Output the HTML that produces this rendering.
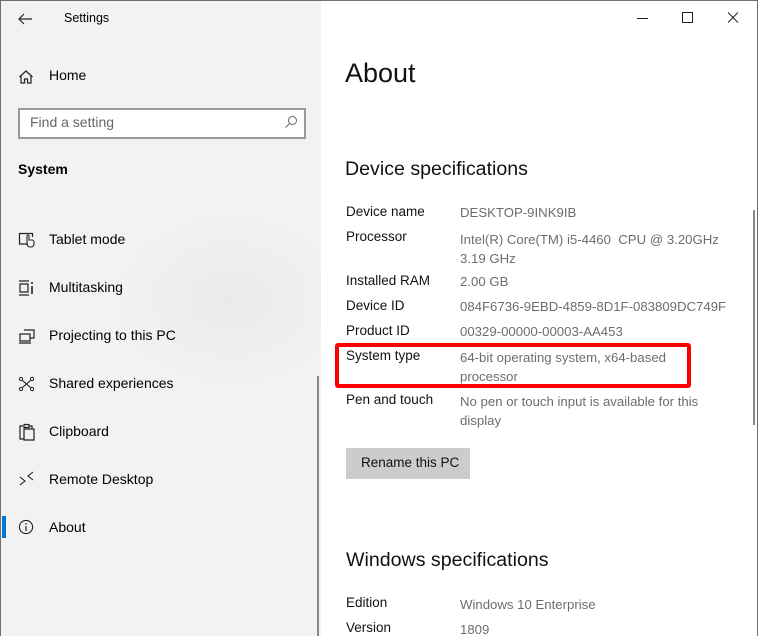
<!DOCTYPE html>
<html><head><meta charset="utf-8"><style>
*{margin:0;padding:0;box-sizing:border-box}
html,body{width:758px;height:636px;overflow:hidden}
body{font-family:"Segoe UI","Liberation Sans",sans-serif;background:#fff;position:relative;color:#000}
.win{position:absolute;left:0;top:1px;width:758px;height:636px;overflow:hidden}
.frame{position:absolute;left:0;top:0;width:758px;height:636px;border:1px solid #6f6f6f;border-bottom:none;pointer-events:none}
.side{position:absolute;left:0;top:-1px;width:321px;height:640px;background:radial-gradient(ellipse 120px 90px at 230px 300px,#e9eaeb,#f2f2f2 100%);background-color:#f2f2f2}
.t{position:absolute;white-space:nowrap}
.item{position:absolute;left:49px;font-size:14px;color:#000}
.ic{position:absolute;left:18px}
.lbl{position:absolute;left:346px;font-size:13.5px;color:#111}
.val{position:absolute;left:460px;font-size:13.2px;color:#6d6d6d;line-height:19px;white-space:nowrap}
</style></head><body><div class="win">
<div class="side">
 <svg class="ic" style="left:17px;top:12px" width="16" height="14" viewBox="0 0 16 14"><path d="M15 7H2M7 2L2 7l5 5" fill="none" stroke="#222" stroke-width="1.2"/></svg>
 <div class="t" style="left:64px;top:11px;font-size:12.5px">Settings</div>
 <svg class="ic" style="top:69px" width="16" height="16" viewBox="0 0 16 16"><path d="M1.5 8L8 2l6.5 6M3 7v7h3.5v-4h3v4H13V7" fill="none" stroke="#222" stroke-width="1.2"/></svg>
 <div class="item" style="top:67px">Home</div>
 <div style="position:absolute;left:18px;top:108px;width:288px;height:31px;border:2px solid #999;background:#fff"></div>
 <div class="t" style="left:30px;top:114px;font-size:14px;color:#666">Find a setting</div>
 <svg style="position:absolute;left:284px;top:115px" width="14" height="14" viewBox="0 0 14 14"><circle cx="8.5" cy="5.5" r="4" fill="none" stroke="#666"/><path d="M5.5 8.5L1.5 12.5" stroke="#666"/></svg>
 <div class="t" style="left:18px;top:161px;font-size:14px;font-weight:bold">System</div>

 <svg class="ic" style="top:231px" width="18" height="18" viewBox="0 0 18 18"><path d="M10 13H1.5V2.5h13V6" fill="none" stroke="#222" stroke-width="1.2"/><path d="M9 9v-4a1 1 0 0 1 2 0v4h3a2 2 0 0 1 2 2v2a3 3 0 0 1-3 3h-1a3 3 0 0 1-3-3z" fill="none" stroke="#222" stroke-width="1.1"/></svg>
 <div class="item" style="top:231px">Tablet mode</div>
 <svg class="ic" style="top:280px" width="18" height="16" viewBox="0 0 18 16"><path d="M1 1h10M1 15h10M2 4h8v8H2z" fill="none" stroke="#222" stroke-width="1.2"/><path d="M14 2v2M14 6v8" stroke="#222" stroke-width="1.6"/></svg>
 <div class="item" style="top:279px">Multitasking</div>
 <svg class="ic" style="top:328px" width="18" height="16" viewBox="0 0 18 16"><path d="M6 2h10v8H12M2 6h10v7H2zM1 15h12" fill="none" stroke="#222" stroke-width="1.2"/></svg>
 <div class="item" style="top:327px">Projecting to this PC</div>
 <svg class="ic" style="top:376px" width="18" height="16" viewBox="0 0 18 16"><circle cx="3" cy="3" r="1.6" fill="none" stroke="#222"/><circle cx="14" cy="3" r="1.6" fill="none" stroke="#222"/><circle cx="3" cy="13" r="1.6" fill="none" stroke="#222"/><circle cx="14" cy="13" r="1.6" fill="none" stroke="#222"/><path d="M4.5 4.5l8 7M12.5 4.5l-8 7" stroke="#222" stroke-width="1.1"/></svg>
 <div class="item" style="top:375px">Shared experiences</div>
 <svg class="ic" style="top:423px" width="18" height="18" viewBox="0 0 18 18"><path d="M5 3H2v13h4M11 3h3v3M6 6h10v11H6z M6 1.5h5v3H6z" fill="none" stroke="#222" stroke-width="1.2"/></svg>
 <div class="item" style="top:423px">Clipboard</div>
 <svg class="ic" style="top:471px" width="18" height="16" viewBox="0 0 18 16"><path d="M2 6l5 4-5 4M15 1l-5 4 5 4" fill="none" stroke="#222" stroke-width="1.1"/></svg>
 <div class="item" style="top:471px">Remote Desktop</div>
 <div style="position:absolute;left:2px;top:516px;width:4px;height:22px;background:#0078d7"></div>
 <svg class="ic" style="top:519px" width="16" height="16" viewBox="0 0 16 16"><circle cx="8" cy="8" r="6.6" fill="none" stroke="#222" stroke-width="1.1"/><path d="M8 7v5" stroke="#222" stroke-width="1.2"/><circle cx="8" cy="4.8" r=".8" fill="#222"/></svg>
 <div class="item" style="top:519px">About</div>
 <div style="position:absolute;left:317px;top:376px;width:2px;height:264px;background:#888"></div>
</div>

<svg style="position:absolute;left:633px;top:10px" width="110" height="14" viewBox="0 0 110 14"><path d="M4 7.5h11" stroke="#222"/><rect x="49.5" y="1.5" width="10" height="10" fill="none" stroke="#222"/><path d="M95 1.5l10 10M105 1.5l-10 10" stroke="#222"/></svg>

<div class="t" style="left:345px;top:57px;font-size:27px;font-weight:300;color:#111">About</div>
<div class="t" style="left:345px;top:157px;font-size:19.6px;color:#111">Device specifications</div>

<div class="lbl" style="top:203px">Device name</div><div class="val" style="top:202px">DESKTOP-9INK9IB</div>
<div class="lbl" style="top:228px">Processor</div><div class="val" style="top:229px">Intel(R) Core(TM) i5-4460&nbsp; CPU @ 3.20GHz<br>3.19 GHz</div>
<div class="lbl" style="top:272px">Installed RAM</div><div class="val" style="top:271px">2.00 GB</div>
<div class="lbl" style="top:297px">Device ID</div><div class="val" style="top:296px">084F6736-9EBD-4859-8D1F-083809DC749F</div>
<div class="lbl" style="top:322px">Product ID</div><div class="val" style="top:321px">00329-00000-00003-AA453</div>
<div class="lbl" style="top:347px">System type</div><div class="val" style="top:347px">64-bit operating system, x64-based<br>processor</div>
<div style="position:absolute;left:335px;top:342px;width:356px;height:45px;border:4px solid #f00;border-radius:3px"></div>
<div class="lbl" style="top:391px">Pen and touch</div><div class="val" style="top:391px">No pen or touch input is available for this<br>display</div>

<div style="position:absolute;left:346px;top:447px;width:124px;height:31px;background:#cccccc"></div>
<div class="t" style="left:361px;top:454px;font-size:13.5px;color:#111">Rename this PC</div>

<div class="t" style="left:346px;top:548px;font-size:19.6px;color:#111">Windows specifications</div>
<div class="lbl" style="top:594px">Edition</div><div class="val" style="top:594px">Windows 10 Enterprise</div>
<div class="lbl" style="top:619px">Version</div><div class="val" style="top:619px">1809</div>

<div style="position:absolute;left:753px;top:209px;width:2px;height:215px;background:#888"></div>
</div><div class="frame"></div></body></html>
